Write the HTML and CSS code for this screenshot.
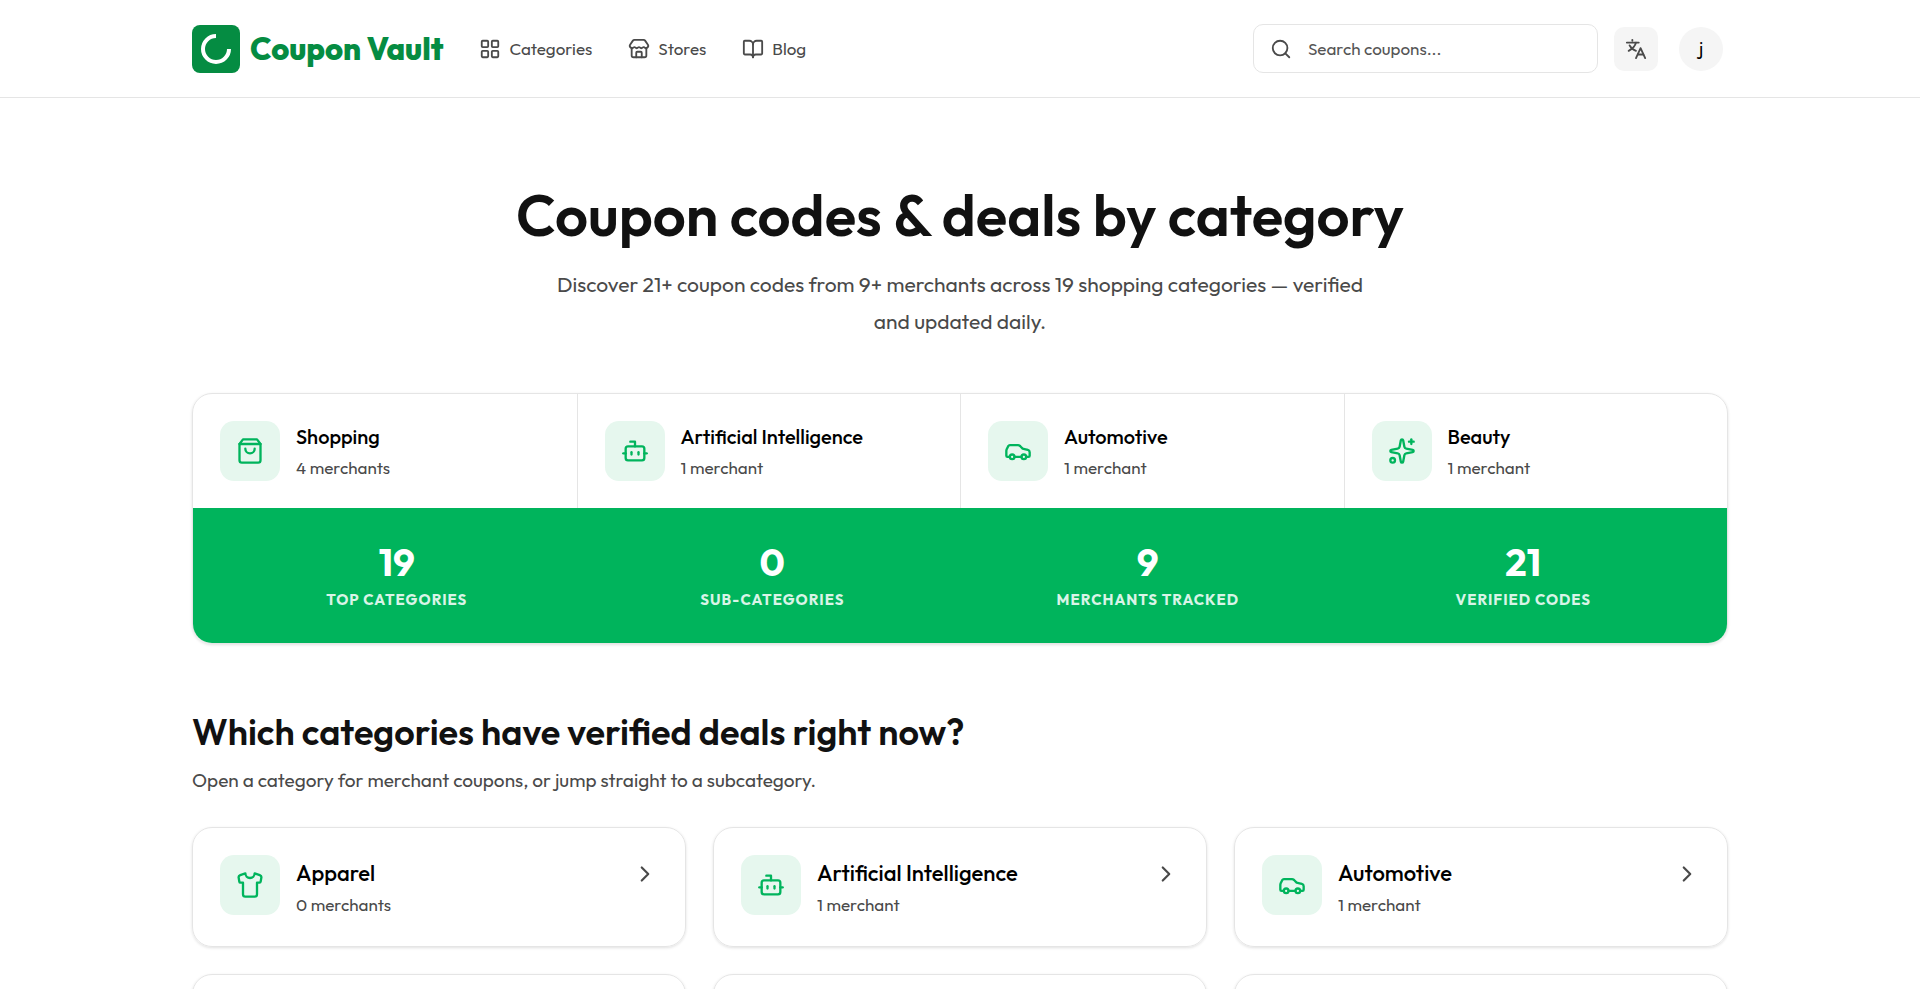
FILE: index.html
```html
<!DOCTYPE html>
<html lang="en">
<head>
    <meta charset="UTF-8">
    <meta name="viewport" content="width=device-width, initial-scale=1.0">
    <title>Coupon codes &amp; deals by category | Coupon Vault</title>
    <link rel="stylesheet" href="styles.css">
</head>
<body>
    <!-- Icon sprite -->
    <svg class="sprite" aria-hidden="true">
        <symbol id="icon-bag" viewBox="0 0 24 24">
            <path d="M6 2 3 6v14a2 2 0 0 0 2 2h14a2 2 0 0 0 2-2V6l-3-4Z"/>
            <path d="M3 6h18"/>
            <path d="M16 10a4 4 0 0 1-8 0"/>
        </symbol>
        <symbol id="icon-bot" viewBox="0 0 24 24">
            <path d="M12 8V4H8"/>
            <rect width="16" height="12" x="4" y="8" rx="2"/>
            <path d="M2 14h2"/>
            <path d="M20 14h2"/>
            <path d="M15 13v2"/>
            <path d="M9 13v2"/>
        </symbol>
        <symbol id="icon-car" viewBox="0 0 24 24">
            <path d="M19 17h2c.6 0 1-.4 1-1v-3c0-.9-.7-1.700-1.500-1.900C18.700 10.600 16 10 16 10s-1.300-1.400-2.200-2.300c-.5-.4-1.100-.7-1.800-.7H5c-.6 0-1.100.4-1.400.9l-1.400 2.900A3.700 3.700 0 0 0 2 12v4c0 .6.4 1 1 1h2"/>
            <circle cx="7" cy="17" r="2"/>
            <path d="M9 17h6"/>
            <circle cx="17" cy="17" r="2"/>
        </symbol>
        <symbol id="icon-sparkles" viewBox="0 0 24 24">
            <path d="M11.017 2.814a1 1 0 0 1 1.966 0l1.051 5.558a2 2 0 0 0 1.594 1.594l5.558 1.051a1 1 0 0 1 0 1.966l-5.558 1.051a2 2 0 0 0-1.594 1.594l-1.051 5.558a1 1 0 0 1-1.966 0l-1.051-5.558a2 2 0 0 0-1.594-1.594l-5.558-1.051a1 1 0 0 1 0-1.966l5.558-1.051a2 2 0 0 0 1.594-1.594z"/>
            <path d="M20 2v4"/>
            <path d="M22 4h-4"/>
            <circle cx="4" cy="20" r="2"/>
        </symbol>
        <symbol id="icon-shirt" viewBox="0 0 24 24">
            <path d="M20.380 3.460 16 2a4 4 0 0 1-8 0L3.620 3.460a2 2 0 0 0-1.340 2.230l.58 3.470a1 1 0 0 0 .99.84H6v10c0 1.100.9 2 2 2h8a2 2 0 0 0 2-2V10h2.150a1 1 0 0 0 .99-.84l.58-3.470a2 2 0 0 0-1.340-2.230z"/>
        </symbol>
        <symbol id="icon-chevron" viewBox="0 0 24 24">
            <path d="m9 18 6-6-6-6"/>
        </symbol>
    </svg>

    <header class="site-header">
        <div class="container header-inner">
            <a class="logo" href="#">
                <svg class="logo-mark" viewBox="0 0 48 48" aria-hidden="true">
                    <rect width="48" height="48" rx="8" fill="#058c42"/>
                    <path d="M24 11a13 13 0 1 0 13 13" fill="none" stroke="#fff" stroke-width="4"/>
                </svg>
                <span class="logo-text">Coupon Vault</span>
            </a>
            <nav class="main-nav">
                <a href="#">
                    <svg class="icon" viewBox="0 0 24 24" aria-hidden="true">
                        <rect width="7" height="7" x="3" y="3" rx="1"/>
                        <rect width="7" height="7" x="14" y="3" rx="1"/>
                        <rect width="7" height="7" x="14" y="14" rx="1"/>
                        <rect width="7" height="7" x="3" y="14" rx="1"/>
                    </svg>
                    Categories
                </a>
                <a href="#">
                    <svg class="icon" viewBox="0 0 24 24" aria-hidden="true">
                        <path d="M15 21v-5a1 1 0 0 0-1-1h-4a1 1 0 0 0-1 1v5"/>
                        <path d="M17.774 10.310a1.120 1.120 0 0 0-1.549 0 2.500 2.500 0 0 1-3.451 0 1.120 1.120 0 0 0-1.548 0 2.500 2.500 0 0 1-3.452 0 1.120 1.120 0 0 0-1.549 0 2.500 2.500 0 0 1-3.770-3.248l2.889-4.184A2 2 0 0 1 7 2h10a2 2 0 0 1 1.653.873l2.895 4.192a2.500 2.500 0 0 1-3.774 3.244"/>
                        <path d="M4 10.950V19a2 2 0 0 0 2 2h12a2 2 0 0 0 2-2v-8.050"/>
                    </svg>
                    Stores
                </a>
                <a href="#">
                    <svg class="icon" viewBox="0 0 24 24" aria-hidden="true">
                        <path d="M12 7v14"/>
                        <path d="M3 18a1 1 0 0 1-1-1V4a1 1 0 0 1 1-1h5a4 4 0 0 1 4 4 4 4 0 0 1 4-4h5a1 1 0 0 1 1 1v13a1 1 0 0 1-1 1h-6a3 3 0 0 0-3 3 3 3 0 0 0-3-3z"/>
                    </svg>
                    Blog
                </a>
            </nav>
            <div class="header-actions">
                <label class="search">
                    <svg class="icon" viewBox="0 0 24 24" aria-hidden="true">
                        <circle cx="11" cy="11" r="8"/>
                        <path d="m21 21-4.300-4.300"/>
                    </svg>
                    <input type="search" placeholder="Search coupons..." aria-label="Search coupons">
                </label>
                <button class="lang-btn" type="button" aria-label="Change language">
                    <svg class="icon" viewBox="0 0 24 24" aria-hidden="true">
                        <path d="M2 5h13"/>
                        <path d="M8 2v1"/>
                        <path d="M12 5c-1 4-4 7-8 9"/>
                        <path d="M5 8c1 2 4 5 7 6"/>
                        <path d="m22 22-5-11-5 11"/>
                        <path d="M14 18h6"/>
                    </svg>
                </button>
                <button class="avatar" type="button" aria-label="Account">j</button>
            </div>
        </div>
    </header>

    <main class="container">
        <section class="hero">
            <h1>Coupon codes &amp; deals by category</h1>
            <p>Discover 21+ coupon codes from 9+ merchants across 19 shopping categories — verified and updated daily.</p>
        </section>

        <section class="overview">
            <div class="featured">
                <a class="featured-item" href="#">
                    <span class="tile"><svg class="icon"><use href="#icon-bag"/></svg></span>
                    <span class="info"><span class="name">Shopping</span><span class="count">4 merchants</span></span>
                </a>
                <a class="featured-item" href="#">
                    <span class="tile"><svg class="icon"><use href="#icon-bot"/></svg></span>
                    <span class="info"><span class="name">Artificial Intelligence</span><span class="count">1 merchant</span></span>
                </a>
                <a class="featured-item" href="#">
                    <span class="tile"><svg class="icon"><use href="#icon-car"/></svg></span>
                    <span class="info"><span class="name">Automotive</span><span class="count">1 merchant</span></span>
                </a>
                <a class="featured-item" href="#">
                    <span class="tile"><svg class="icon"><use href="#icon-sparkles"/></svg></span>
                    <span class="info"><span class="name">Beauty</span><span class="count">1 merchant</span></span>
                </a>
            </div>
            <dl class="stats">
                <div class="stat"><dt>Top categories</dt><dd>19</dd></div>
                <div class="stat"><dt>Sub-categories</dt><dd>0</dd></div>
                <div class="stat"><dt>Merchants tracked</dt><dd>9</dd></div>
                <div class="stat"><dt>Verified codes</dt><dd>21</dd></div>
            </dl>
        </section>

        <section class="categories">
            <h2>Which categories have verified deals right now?</h2>
            <p>Open a category for merchant coupons, or jump straight to a subcategory.</p>
            <div class="category-grid">
                <a class="category-card" href="#">
                    <span class="tile"><svg class="icon"><use href="#icon-shirt"/></svg></span>
                    <span class="info"><span class="name">Apparel</span><span class="count">0 merchants</span></span>
                    <svg class="icon chevron"><use href="#icon-chevron"/></svg>
                </a>
                <a class="category-card" href="#">
                    <span class="tile"><svg class="icon"><use href="#icon-bot"/></svg></span>
                    <span class="info"><span class="name">Artificial Intelligence</span><span class="count">1 merchant</span></span>
                    <svg class="icon chevron"><use href="#icon-chevron"/></svg>
                </a>
                <a class="category-card" href="#">
                    <span class="tile"><svg class="icon"><use href="#icon-car"/></svg></span>
                    <span class="info"><span class="name">Automotive</span><span class="count">1 merchant</span></span>
                    <svg class="icon chevron"><use href="#icon-chevron"/></svg>
                </a>
                <div class="category-card"></div>
                <div class="category-card"></div>
                <div class="category-card"></div>
            </div>
        </section>
    </main>
</body>
</html>
```
FILE: styles.css
```css
* {
    box-sizing: border-box;
}

body {
    margin: 0;
    font-family: Outfit, Lato, "Liberation Sans", sans-serif;
    font-size: 17px;
    color: #111;
    background-color: #fff;
}

a {
    color: inherit;
    text-decoration: none;
}

.sprite {
    display: none;
}

.icon {
    width: 22px;
    height: 22px;
    flex-shrink: 0;
    fill: none;
    stroke: currentColor;
    stroke-width: 2;
    stroke-linecap: round;
    stroke-linejoin: round;
}

.container {
    width: 80%;
    margin: 0 auto;
}

/* Header */
.site-header {
    border-bottom: 1px solid #e5e5e5;
}

.header-inner {
    display: flex;
    align-items: center;
    height: 97px;
}

.logo {
    display: flex;
    align-items: center;
    gap: 10px;
    color: #058c42;
}

.logo-mark {
    width: 48px;
    height: 48px;
}

.logo-text {
    font-size: 31px;
    font-weight: 800;
    line-height: 40px;
    white-space: nowrap;
}

.main-nav {
    display: flex;
    gap: 36px;
    margin-left: 36px;
    color: #4a4a4a;
}

.main-nav a {
    display: flex;
    align-items: center;
    gap: 8px;
}

.header-actions {
    display: flex;
    align-items: center;
    margin-left: auto;
    padding-right: 5px;
}

.search {
    display: flex;
    align-items: center;
    gap: 16px;
    width: 345px;
    height: 49px;
    padding: 0 16px;
    border: 1px solid #e5e5e5;
    border-radius: 10px;
    color: #4a4a4a;
}

.search input {
    flex: 1;
    min-width: 0;
    padding: 0;
    border: none;
    outline: none;
    font: inherit;
    background: none;
}

.search input::placeholder {
    color: #555;
    opacity: 1;
}

.lang-btn,
.avatar {
    display: flex;
    align-items: center;
    justify-content: center;
    width: 44px;
    height: 44px;
    padding: 0;
    border: none;
    background-color: #f5f5f5;
    font: inherit;
    cursor: pointer;
}

.lang-btn {
    margin: 0 21px 0 16px;
    border-radius: 10px;
    color: #4a4a4a;
}

.avatar {
    border-radius: 50%;
    font-size: 18px;
    color: #000;
}

/* Hero */
.hero {
    padding: 81px 0 53px;
    text-align: center;
}

.hero h1 {
    margin: 0;
    font-size: 58px;
    font-weight: 600;
    line-height: 72px;
}

.hero p {
    max-width: 840px;
    margin: 15px auto 0;
    font-size: 21px;
    line-height: 37px;
    color: #4a4a4a;
}

/* Featured categories and totals */
.overview {
    overflow: hidden;
    border: 1px solid #e5e5e5;
    border-radius: 20px;
    box-shadow: 0 1px 3px rgba(0, 0, 0, 0.12);
}

.featured {
    display: grid;
    grid-template-columns: repeat(4, 1fr);
}

.featured-item {
    display: flex;
    align-items: center;
    gap: 16px;
    padding: 26px 27px;
}

.featured-item + .featured-item {
    border-left: 1px solid #e5e5e5;
}

.tile {
    display: flex;
    align-items: center;
    justify-content: center;
    flex-shrink: 0;
    width: 60px;
    height: 60px;
    border-radius: 14px;
    background-color: #e6f7ee;
    color: #00b45c;
}

.tile .icon {
    width: 28px;
    height: 28px;
}

.info {
    display: flex;
    flex-direction: column;
    flex: 1;
}

.name {
    font-size: 20px;
    font-weight: 500;
    line-height: 34px;
    color: #000;
}

.count {
    font-size: 17px;
    line-height: 28px;
    color: #4a4a4a;
}

.stats {
    display: grid;
    grid-template-columns: repeat(4, 1fr);
    gap: 24px;
    margin: 0;
    padding: 31px 28px;
    background-color: #00b45c;
    text-align: center;
}

.stat {
    display: flex;
    flex-direction: column-reverse;
    gap: 3px;
    color: #fff;
}

.stat dd {
    margin: 0;
    font-size: 38px;
    font-weight: 700;
    line-height: 46px;
}

.stat dt {
    font-size: 15px;
    font-weight: 700;
    line-height: 24px;
    letter-spacing: 1px;
    text-transform: uppercase;
    color: #d9f4e7;
}

/* Category list */
.categories {
    padding: 64px 0;
}

.categories h2 {
    margin: 0;
    font-size: 36px;
    font-weight: 600;
    line-height: 48px;
}

.categories p {
    margin: 8px 0 31px;
    font-size: 19px;
    line-height: 32px;
    color: #4a4a4a;
}

.category-grid {
    display: grid;
    grid-template-columns: repeat(3, 1fr);
    gap: 27px;
}

.category-card {
    display: flex;
    gap: 16px;
    min-height: 119px;
    padding: 27px;
    border: 1px solid #e5e5e5;
    border-radius: 20px;
    box-shadow: 0 1px 3px rgba(0, 0, 0, 0.12);
}

.category-card .name {
    font-size: 22px;
    line-height: 36px;
}

.chevron {
    width: 26px;
    height: 26px;
    margin-top: 6px;
    color: #4a4a4a;
}
```
